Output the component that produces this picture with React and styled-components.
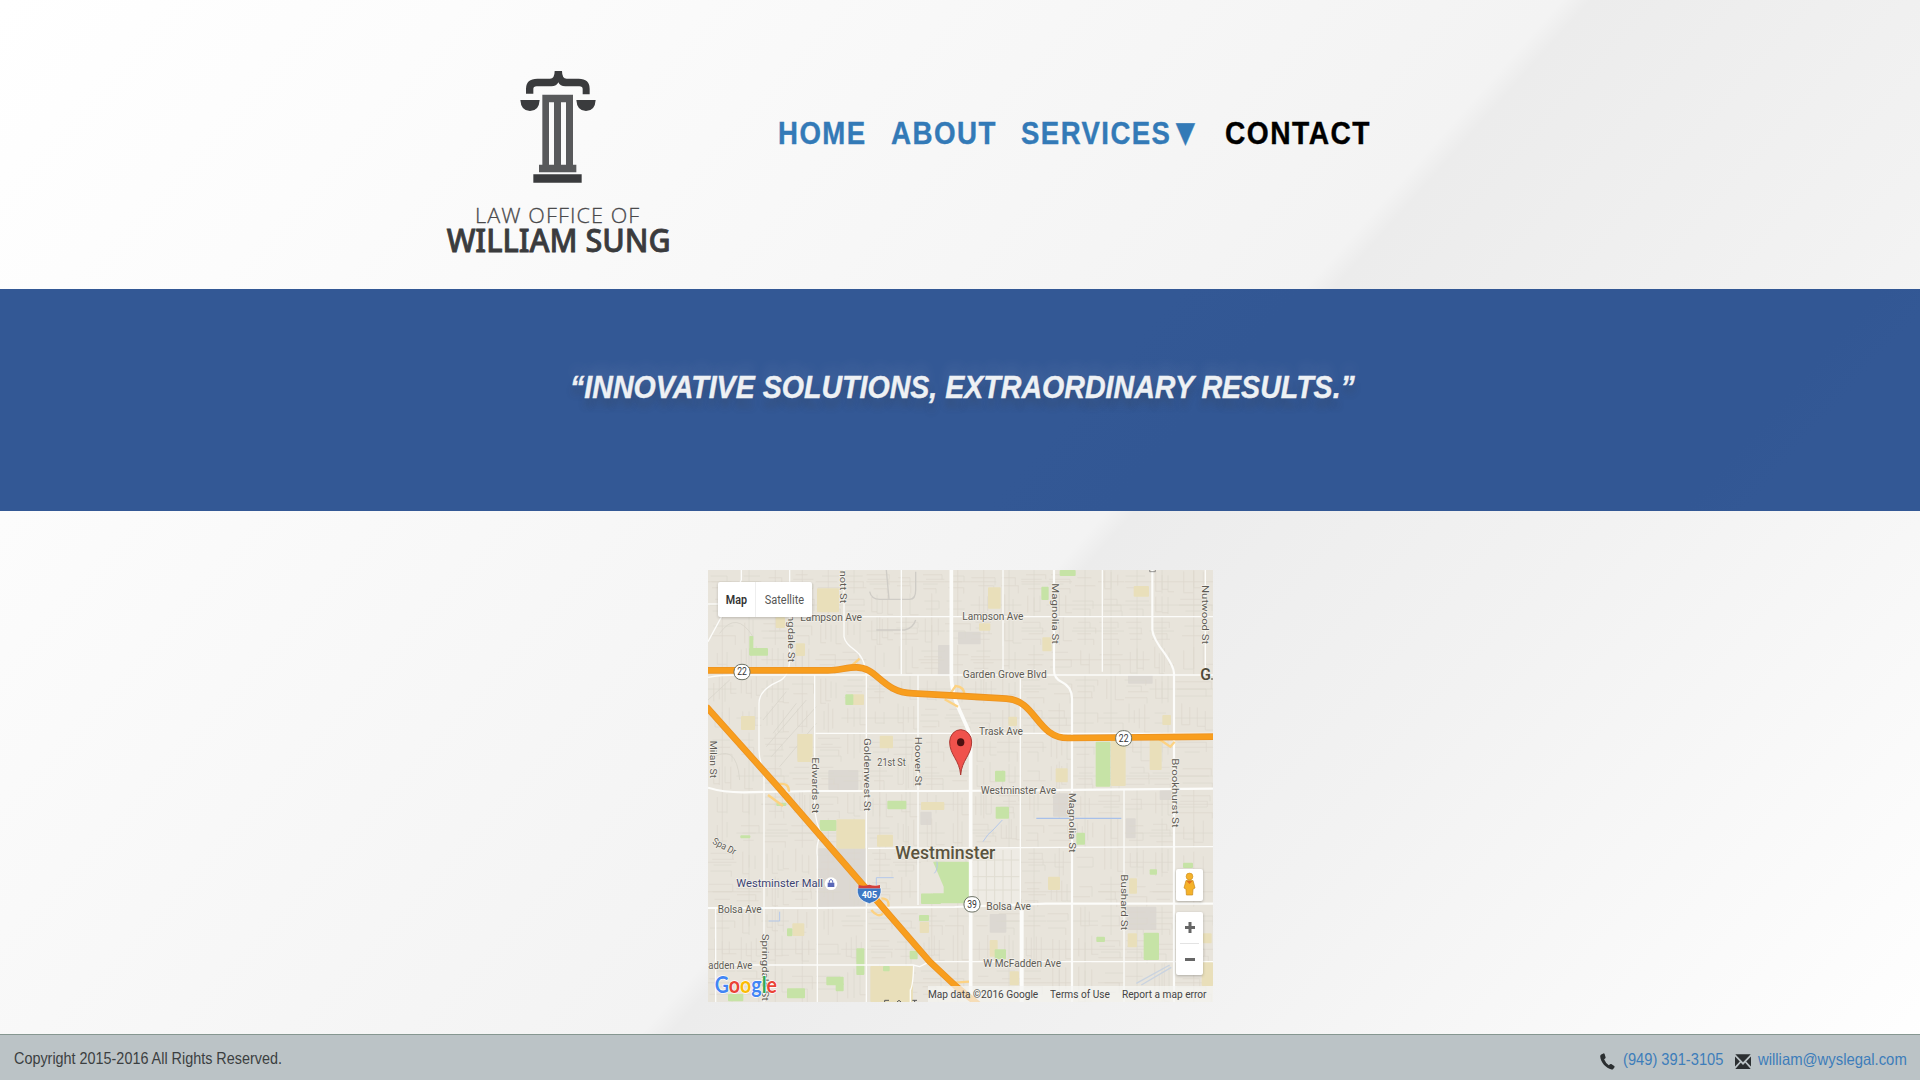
import React from "react";
import styled, { createGlobalStyle } from "styled-components";

const Global = createGlobalStyle`
  * { box-sizing: border-box; }
  html, body { margin: 0; padding: 0; }
  body { font-family: "Liberation Sans", Arial, sans-serif; overflow: hidden; }
`;

const Page = styled.div`
  width: 1920px;
  height: 1080px;
  display: flex;
  flex-direction: column;
  background: linear-gradient(131.7deg, #ffffff 0%, #fcfcfc 16%, #f3f3f3 54.2%, #ececec 55.2%, #f2f2f2 72%, #ffffff 100%);
`;

const Header = styled.header`
  height: 289px;
  flex: none;
  display: flex;
  align-items: flex-start;
  padding: 70px 0 0 446px;
`;

const Logo = styled.svg`
  width: 224px;
  height: 188px;
  flex: none;
  display: block;
  overflow: visible;
`;

const Nav = styled.nav`
  display: flex;
  margin: 45px 0 0 108px;
`;

const Slot = styled.span`
  display: block;
  width: ${(p) => p.$w}px;
  height: 37px;
`;

const Squeeze = styled.span`
  display: inline-block;
  white-space: nowrap;
  transform: scaleX(${(p) => p.$s});
  transform-origin: ${(p) => p.$origin || "left"} center;
`;

const NavText = styled(Squeeze)`
  font-size: 32px;
  line-height: 37px;
  font-weight: 700;
  letter-spacing: 1.7px;
  -webkit-text-stroke: 0.4px currentColor;
  color: ${(p) => (p.$active ? "#000" : "#337ab7")};
`;

const Arrow = styled.span`
  font-family: "DejaVu Sans", sans-serif;
  font-size: 29px;
  line-height: 20px;
  letter-spacing: 0;
  margin-left: 5px;
  position: relative;
  top: -2px;
`;

const Band = styled.section`
  height: 222px;
  flex: none;
  display: flex;
  justify-content: center;
  padding: 80px 0 0 5px;
  background: rgba(34, 74, 140, 0.92);
`;

const Quote = styled(Squeeze)`
  height: 37px;
  font-size: 32px;
  line-height: 37px;
  font-weight: 700;
  font-style: italic;
  -webkit-text-stroke: 0.4px currentColor;
  color: #eef1f4;
  text-shadow: 0 9px 8px rgba(60, 60, 60, 0.24), 0 -10px 14px rgba(255, 255, 255, 0.1);
`;

const Main = styled.main`
  flex: 1;
  display: flex;
  justify-content: center;
  align-items: flex-start;
  padding: 59px 0 0 1px;
`;

const MapFrame = styled.div`
  position: relative;
  width: 505px;
  height: 432px;
  overflow: hidden;
  font-family: Roboto, sans-serif;
`;

const MapSvg = styled.svg`
  display: block;
  width: 505px;
  height: 432px;
`;

const MapTypes = styled.div`
  position: absolute;
  left: 10px;
  top: 12px;
  height: 35px;
  width: 94px;
  display: flex;
  background: #fff;
  border-radius: 2px;
  box-shadow: 0 1px 3px rgba(0, 0, 0, 0.2);
`;

const MapType = styled.div`
  flex: none;
  width: ${(p) => p.$w}px;
  display: flex;
  align-items: center;
  justify-content: center;
  font-size: 12.5px;
  font-weight: ${(p) => (p.$on ? 600 : 400)};
  color: ${(p) => (p.$on ? "#333" : "#565656")};
  border-left: ${(p) => (p.$on ? "none" : "1px solid #eee")};
`;

const Controls = styled.div`
  position: absolute;
  right: 10px;
  top: 299px;
  width: 27px;
  display: flex;
  flex-direction: column;
  gap: 11px;
`;

const ControlBox = styled.div`
  height: ${(p) => p.$h}px;
  background: #fff;
  border-radius: 2px;
  box-shadow: 0 1px 3px rgba(0, 0, 0, 0.25);
  svg { display: block; }
`;

const Legal = styled.div`
  position: absolute;
  right: 0;
  bottom: 0;
  height: 16px;
  display: flex;
  align-items: center;
  background: rgba(245, 245, 242, 0.72);
  color: #444;
  font-size: 11px;
`;

const LegalItem = styled.span`
  display: block;
  width: ${(p) => p.$w}px;
  white-space: nowrap;
`;

const Footer = styled.footer`
  height: 46px;
  flex: none;
  display: flex;
  justify-content: space-between;
  align-items: flex-start;
  padding: 13px 0 0 14px;
  border-top: 1px solid #869791;
  background: #bbc3c6;
  font-size: 16.5px;
  line-height: 21px;
  color: #3b3f41;
`;

const Contacts = styled.div`
  display: flex;
  align-items: flex-start;
`;

const Icon = styled.svg`
  width: 16px;
  height: 17px;
  margin: 5px 7px 0 0;
  flex: none;
  fill: #2b2f31;
`;

const ContactLink = styled.span`
  display: block;
  padding-top: 1px;
  width: ${(p) => p.$w}px;
  color: #3d7dba;
`;

/* One map unit is a third of a pixel. */
const minorStreets = (() => {
  let seed = 11;
  const rnd = () => {
    seed = (seed * 16807) % 2147483647;
    return seed / 2147483647;
  };
  const xs = [25, 110, 185, 268, 347, 425, 500, 580, 657, 735, 813, 890, 965, 1040, 1117, 1195, 1273, 1350, 1423, 1540];
  const ys = [30, 100, 170, 255, 343, 430, 518, 605, 690, 775, 863, 950, 1040, 1125, 1210, 1326];
  let d = "";
  for (let i = 0; i < xs.length - 1; i++) {
    for (let j = 0; j < ys.length - 1; j++) {
      const x = xs[i], y = ys[j], w = xs[i + 1] - x, h = ys[j + 1] - y;
      const vertical = rnd() > 0.55;
      const n = 3 + Math.floor(rnd() * 3);
      for (let k = 1; k < n; k++) {
        const a = rnd() * 0.3, b = 0.65 + rnd() * 0.35;
        if (vertical) {
          const px = Math.round(x + (w * k) / n);
          d += `M${px} ${Math.round(y + h * a)}V${Math.round(y + h * b)}`;
          if (rnd() > 0.5) d += `h${Math.round(w / n)}`;
        } else {
          const py = Math.round(y + (h * k) / n);
          d += `M${Math.round(x + w * a)} ${py}H${Math.round(x + w * b)}`;
          if (rnd() > 0.5) d += `v${Math.round(h / n)}`;
        }
      }
      if (rnd() > 0.4) d += `M${x} ${Math.round(y + h / 2)}h${w}`;
      if (rnd() > 0.4) d += `M${Math.round(x + w / 2)} ${y}v${h}`;
    }
  }
  return d;
})();

const greens = [
  [149, 228, 12, 58], [149, 264, 56, 23], [437, 403, 24, 32], [1080, 30, 48, 18], [1025, 80, 22, 40],
  [1188, 545, 44, 135], [886, 632, 31, 33], [563, 722, 57, 26], [360, 780, 50, 33], [700, 905, 108, 125],
  [664, 1000, 60, 32], [658, 1065, 30, 18], [470, 1165, 24, 80], [380, 1250, 52, 26], [408, 1270, 24, 24],
  [262, 1285, 54, 30], [262, 1105, 16, 24], [550, 1218, 20, 16], [888, 740, 40, 36], [1130, 818, 26, 36],
  [1332, 1118, 46, 82], [1190, 1130, 26, 16], [1350, 928, 22, 16], [1450, 908, 30, 16], [885, 1168, 34, 30],
  [630, 1172, 24, 26], [85, 1302, 46, 22], [230, 728, 30, 10], [122, 826, 30, 9],
];
const sands = [
  [352, 85, 66, 72], [228, 172, 28, 32], [288, 250, 28, 38], [453, 403, 40, 32], [124, 468, 42, 42],
  [293, 522, 46, 84], [540, 527, 40, 38], [865, 82, 38, 64], [838, 190, 34, 22], [1028, 232, 28, 42],
  [1302, 78, 46, 32], [1234, 540, 44, 138], [1350, 540, 36, 90], [1388, 465, 26, 30], [926, 470, 26, 28],
  [1068, 625, 36, 42], [410, 778, 86, 88], [532, 824, 48, 36], [664, 726, 70, 24], [278, 1090, 36, 38],
  [660, 1085, 28, 34], [512, 1218, 128, 108], [1045, 950, 36, 40], [1288, 955, 24, 46], [870, 1140, 24, 50],
  [930, 1234, 28, 42], [1284, 1120, 28, 42], [1348, 1120, 30, 36], [1510, 1120, 26, 30], [1506, 1206, 34, 72],
];
const greys = [
  [356, 865, 144, 176], [386, 630, 90, 60], [775, 215, 68, 38], [715, 255, 40, 90], [1060, 700, 50, 70],
  [870, 1062, 50, 56], [1280, 1040, 90, 70], [1285, 345, 74, 26], [1278, 775, 30, 60], [1380, 690, 40, 30],
  [662, 755, 34, 40],
];

const mid = [
  "M433 30V230Q436 250 465 270Q495 290 500 345V1326",
  "M605 30V343", "M910 30V340", "M962 340V1326", "M1208 30V335", "M1273 690V1326", "M1517 30V340",
  "M345 345V740Q348 790 365 820Q348 850 353 890V1326", "M655 345V1035",
  "M270 30V300Q268 352 235 365Q178 390 178 430V570Q178 600 193 635V1326",
  "M125 30V60L25 245", "M480 170H1540", "M25 352Q60 345 120 345H1540", "M347 520H1540",
  "M505 865L1540 860", "M25 1215H640L660 1220L690 1205H1540", "M48 1045V1326", "M632 1326V1290Q640 1280 642 1215",
  "M25 132H60",
];
const wide = [
  "M1063 30V330Q1063 355 1085 365Q1117 380 1117 415V1326",
  "M1358 30V210Q1360 235 1395 280Q1423 320 1423 340V1326",
  "M25 683Q70 697 130 697L350 693H765L1540 686",
  "M25 1044H340L765 1041L1040 1031H1540",
];

const H22 = "M20 331H385C420 331 440 322 470 322C535 322 545 397 640 400L765 407L920 416C1010 420 1010 534 1105 534L1545 530";
const I405 = "M20 440L230 675L490 975L530 1020L690 1205L770 1280L850 1345";

/* text, x, y, length, rotation */
const labels = [
  ["Lampson Ave", 302, 183, 185], ["Lampson Ave", 788, 179, 183], ["Garden Grove Blvd", 789, 355, 252],
  ["Trask Ave", 838, 526, 132], ["21st St", 533, 617, 85], ["Westminster Ave", 843, 702, 226],
  ["Bolsa Ave", 54, 1059, 132], ["Bolsa Ave", 860, 1050, 134], ["adden Ave", 26, 1228, 132],
  ["W McFadden Ave", 851, 1221, 233],
  ["nott St", 422, 32, 98, 90], ["ngdale St", 264, 165, 142, 90], ["Milan St", 31, 542, 112, 90],
  ["Edwards St", 337, 592, 168, 90], ["Goldenwest St", 493, 534, 220, 90], ["Hoover St", 646, 530, 148, 90],
  ["Magnolia St", 1057, 70, 182, 90], ["Nutwood St", 1506, 75, 178, 90], ["Brookhurst St", 1416, 595, 208, 90],
  ["Magnolia St", 1108, 698, 180, 90], ["Bushard St", 1264, 943, 168, 90], ["Springdale St", 188, 1121, 202, 90],
  ["Spa Dr", 36, 850, 76, 28],
];

function Label({ d }) {
  const [text, x, y, len, rot] = d;
  return (
    <text
      transform={`translate(${x} ${y}) rotate(${rot || 0})`}
      textLength={len}
      lengthAdjust="spacingAndGlyphs"
      fontSize={rot ? 29 : 33}
      fill="#5e5b54"
      stroke="#f4f2ec"
      strokeWidth="4"
      strokeLinejoin="round"
      paintOrder="stroke"
    >
      {text}
    </text>
  );
}

function Shield({ x, y, children }) {
  return (
    <g>
      <rect x={x - 24} y={y - 23} width="48" height="46" rx="21" fill="#fff" stroke="#6c7265" strokeWidth="3" />
      <text x={x} y={y + 10} textAnchor="middle" textLength="29" lengthAdjust="spacingAndGlyphs" fontSize="30" fill="#333">{children}</text>
    </g>
  );
}

function StreetMap() {
  const boxes = (list, fill) => list.map(([x, y, w, h], i) => <rect key={fill + i} x={x} y={y} width={w} height={h} rx="3" fill={fill} />);
  return (
    <MapSvg viewBox="25 30 1515 1296" preserveAspectRatio="none" fontFamily="Roboto, sans-serif">
      <rect x="25" y="30" width="1515" height="1296" fill="#e8e4db" />
      {boxes(greys, "#dcd8d2")}
      <path d={minorStreets} fill="none" stroke="#dcd8cd" strokeWidth="2" />
      <path d="M200 560L320 420M215 590L350 440M240 620L350 490M190 480L260 395M220 520L290 430M30 600Q110 540 120 660M25 420L90 360M60 220Q110 150 160 230" fill="none" stroke="#d9d5cb" strokeWidth="2.5" />
      <path d="M510 95Q515 118 540 118H630Q648 118 648 90V35M560 30L568 118M530 210H615Q640 205 648 180" fill="none" stroke="#cfccc6" strokeWidth="4" />
      <path d="M820 865H960V1040H820Z" fill="#eeebe4" />
      <path d="M835 870V1030M860 870V1030M885 870V1030M910 870V1030M935 870V1030M820 900H960M820 950H960M820 990H960" stroke="#e0ddd2" strokeWidth="3" />
      {boxes(sands, "#e9dfba")}
      {boxes(greens, "#c6e3a6")}
      <path d="M700 905L732 980V1000L664 1000V905Z" fill="#e9e5dc" />
      <path d="M1010 775H1265" stroke="#a7c0ea" strokeWidth="4" />
      <path d="M850 845Q865 820 880 810L908 780M530 975V953H582M207 1083H240V1055M712 905Q715 930 704 940" fill="none" stroke="#b4c8ea" strokeWidth="3" />
      <path d="M1310 1270L1410 1215M1325 1275L1415 1222" stroke="#c9d3e0" strokeWidth="4" />
      <g fill="none" stroke="#fcfcfa" strokeLinejoin="round">
        {mid.map((d) => <path key={d} d={d} strokeWidth="4" />)}
        {wide.map((d) => <path key={d} d={d} strokeWidth="6.5" />)}
        <path d="M755 30V350Q757 400 775 440L806 510Q813 530 813 570V1326" strokeWidth="11" />
        <path d="M968 1040V1326" strokeWidth="8" />
      </g>
      <path d="M455 318L480 296M735 418L775 440M752 400L768 378Q795 380 795 408M1370 532L1412 560L1425 545M205 705L250 738M240 672Q268 668 268 695M515 1050Q535 1075 550 1060M545 1015Q570 1015 566 1040M765 1268L808 1265" fill="none" stroke="#fcd283" strokeWidth="7" />
      <g fill="none" strokeLinejoin="round">
        <path d={H22} stroke="#ec9322" strokeWidth="20" />
        <path d={I405} stroke="#ec9322" strokeWidth="20" />
        <path d={H22} stroke="#f89e1e" strokeWidth="15" />
        <path d={I405} stroke="#f89e1e" strokeWidth="15" />
      </g>
      {labels.map((d, i) => <Label key={i} d={d} />)}
      <text x="587" y="897" textLength="300" lengthAdjust="spacingAndGlyphs" fontSize="54" fontWeight="500" fill="#5a5440" stroke="#f1eee6" strokeWidth="5" paintOrder="stroke">Westminster</text>
      <text x="1502" y="361" fontSize="52" fontWeight="500" fill="#4e4938" textLength="32" lengthAdjust="spacingAndGlyphs">G</text>
      <path d="M1535 357h4" stroke="#4e4938" strokeWidth="4" />
      <text x="110" y="982" textLength="260" lengthAdjust="spacingAndGlyphs" fontSize="33" fill="#3c4373" stroke="#f4f2ec" strokeWidth="4" paintOrder="stroke">Westminster Mall</text>
      <circle cx="394" cy="971" r="19" fill="#fff" />
      <path d="M384 968H404V981H384Z" fill="#5a68b8" />
      <path d="M389 968V962Q394 955 399 962V968" fill="none" stroke="#5a68b8" strokeWidth="3" />
      <Shield x={127} y={336}>22</Shield>
      <Shield x={1272} y={535}>22</Shield>
      <Shield x={817} y={1033}>39</Shield>
      <path d="M473 984H544Q547 1012 526 1024L509 1031L492 1024Q470 1012 473 984Z" fill="#3d78c4" stroke="#fff" strokeWidth="2" />
      <path d="M477 975Q493 980 509 974Q525 980 541 975V985H476Z" fill="#d3403c" />
      <text x="509" y="1015" textAnchor="middle" fontSize="29" fontWeight="700" fill="#fff" textLength="46" lengthAdjust="spacingAndGlyphs">405</text>
      <path d="M555 1326V1321H568M592 1326L598 1321L604 1326M638 1321H652M645 1321V1326" fill="none" stroke="#555" strokeWidth="3" />
      <path d="M1350 30v5h17v-5" fill="none" stroke="#666" strokeWidth="2" />
      <path d="M783 645C780 600 750 585 750 546A33 37 0 0 1 816 546C816 585 786 600 783 645Z" fill="#f0524c" stroke="#ab3731" strokeWidth="3" />
      <ellipse cx="783" cy="547" rx="11" ry="12" fill="#4c1010" />
      <text x="45" y="1299" textLength="187" lengthAdjust="spacingAndGlyphs" fontFamily="Lato, sans-serif" fontSize="67" fontWeight="700" stroke="#fff" strokeWidth="4" paintOrder="stroke" strokeLinejoin="round">
        <tspan fill="#4285f4">G</tspan><tspan fill="#ea4335">o</tspan><tspan fill="#fbbc05">o</tspan><tspan fill="#4285f4">g</tspan><tspan fill="#34a853">l</tspan><tspan fill="#ea4335">e</tspan>
      </text>
    </MapSvg>
  );
}

export default function App() {
  return (
    <>
      <Global />
      <Page>
        <Header>
          <Logo viewBox="78 60 672 564">
            <path d="M318 131V116Q318 86 352 86H390Q404 86 404 63H426Q426 86 440 86H476Q509 86 509 116V133H488V117Q488 109 478 109H436Q420 109 415 97Q410 109 394 109H350Q340 109 340 117V131Z" fill="#3a3b3d" />
            <path d="M301 150H359Q357 183 330 183Q303 183 301 150ZM469 150H527Q525 183 498 183Q471 183 469 150Z" fill="#3a3b3d" />
            <path fillRule="evenodd" d="M367 134H459V344H469V367H357V344H367ZM387 157V344H402V157ZM423 157V344H438V157Z" fill="#58595b" />
            <path d="M340 373H485V398H340Z" fill="#3a3b3d" />
            <text x="165" y="518" textLength="496" lengthAdjust="spacingAndGlyphs" fontFamily='"Open Sans", sans-serif' fontWeight="300" fontSize="59" letterSpacing="3" fill="#4a4a4c" stroke="#4a4a4c" strokeWidth="0.8">LAW OFFICE OF</text>
            <text x="80" y="607" textLength="672" lengthAdjust="spacingAndGlyphs" fontFamily='"Noto Sans", sans-serif' fontWeight="500" fontSize="97" fill="#3a3b3d" stroke="#3a3b3d" strokeWidth="2.5">WILLIAM SUNG</text>
          </Logo>
          <Nav>
            <Slot $w={113}><NavText $s={0.862}>HOME</NavText></Slot>
            <Slot $w={130}><NavText $s={0.866}>ABOUT</NavText></Slot>
            <Slot $w={204}><NavText $s={0.86}>SERVICES<Arrow>▼</Arrow></NavText></Slot>
            <Slot $w={150}><NavText $s={0.88} $active>CONTACT</NavText></Slot>
          </Nav>
        </Header>
        <Band>
          <Quote $s={0.893} $origin="center">“INNOVATIVE SOLUTIONS, EXTRAORDINARY RESULTS.”</Quote>
        </Band>
        <Main>
          <MapFrame>
            <StreetMap />
            <MapTypes>
              <MapType $w={37} $on><Squeeze $s={0.86} $origin="center">Map</Squeeze></MapType>
              <MapType $w={57}><Squeeze $s={0.88} $origin="center">Satellite</Squeeze></MapType>
            </MapTypes>
            <Controls>
              <ControlBox $h={32}>
                <svg width="27" height="32" viewBox="0 0 27 32">
                  <circle cx="13.5" cy="7.5" r="3.4" fill="#f5b22a" stroke="#c98b1d" strokeWidth="0.6" />
                  <path d="M10 11.5H17L19 19L17 20L16.6 26H10.4L10 20L8 19Z" fill="#f5b22a" stroke="#c98b1d" strokeWidth="0.7" />
                  <path d="M10.5 12L13.5 15L16.5 12Z" fill="#e2701d" />
                </svg>
              </ControlBox>
              <ControlBox $h={63}>
                <svg width="27" height="63" viewBox="0 0 27 63">
                  <path d="M9 15.5H19M14 10V21M9 47.5H19" stroke="#666" strokeWidth="3" />
                  <path d="M4 31.5H23" stroke="#e3e3e3" strokeWidth="1" />
                </svg>
              </ControlBox>
            </Controls>
            <Legal>
              <LegalItem $w={122}><Squeeze $s={0.92}>Map data ©2016 Google</Squeeze></LegalItem>
              <LegalItem $w={72}><Squeeze $s={0.92}>Terms of Use</Squeeze></LegalItem>
              <LegalItem $w={91}><Squeeze $s={0.92}>Report a map error</Squeeze></LegalItem>
            </Legal>
          </MapFrame>
        </Main>
        <Footer>
          <Squeeze $s={0.872}>Copyright 2015-2016 All Rights Reserved.</Squeeze>
          <Contacts>
            <Icon viewBox="0 0 16 17">
              <path d="M1.2 1.6L3.4 0.4Q4.2 0.1 4.6 0.9L5.6 4.2Q5.8 4.9 5.1 5.4L4.1 6.2Q5.6 10 8.8 12.2L10 11.2Q10.6 10.7 11.3 11.1L14.2 13Q14.9 13.5 14.5 14.2L13.2 15.9Q12.6 16.6 11.6 16.4C6 15.2 0.5 9 0.2 3.4Q0.2 2.2 1.2 1.6Z" />
            </Icon>
            <ContactLink $w={112}><Squeeze $s={0.89}>(949) 391-3105</Squeeze></ContactLink>
            <Icon viewBox="0 0 16 17">
              <path d="M0.3 1.2H15.7L8 9.2ZM0 3.4L4.8 8.6L0 13.6ZM16 3.4V13.6L11.2 8.6ZM0.3 16L5.8 9.7L8 12L10.2 9.7L15.7 16Z" />
            </Icon>
            <ContactLink $w={162}><Squeeze $s={0.9}>william@wyslegal.com</Squeeze></ContactLink>
          </Contacts>
        </Footer>
      </Page>
    </>
  );
}
